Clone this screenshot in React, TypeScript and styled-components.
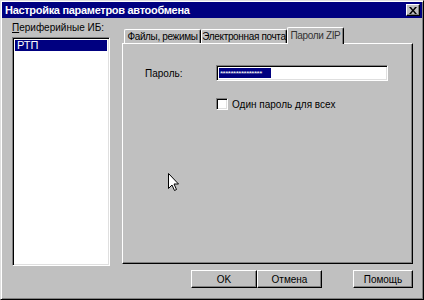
import styled, { createGlobalStyle } from 'styled-components'

const GlobalStyle = createGlobalStyle`
  html, body {
    margin: 0;
    padding: 0;
    background: #c0c0c0;
  }
  body {
    font-family: "Liberation Sans", Arial, sans-serif;
    font-size: 10px;
    color: #000;
  }
`

const Window = styled.div`
  position: relative;
  width: 424px;
  height: 300px;
  box-sizing: border-box;
  background: #c0c0c0;
  border-top: 1px solid #dfdfdf;
  border-left: 1px solid #dfdfdf;
  border-right: 1px solid #000;
  border-bottom: 1px solid #000;
  box-shadow: inset 1px 1px #fff, inset -1px -1px #808080;
  padding: 1px;
  display: flex;
  flex-direction: column;
`

const TitleBar = styled.div`
  height: 16px;
  background: #000080;
  color: #fff;
  font-weight: bold;
  font-size: 11px;
  display: flex;
  align-items: center;
  justify-content: space-between;
  padding-left: 3px;
  letter-spacing: -0.3px;
`

const CloseButton = styled.div`
  width: 14px;
  height: 12px;
  margin-right: 2px;
  box-sizing: border-box;
  background: #c0c0c0;
  border-top: 1px solid #fff;
  border-left: 1px solid #fff;
  border-right: 1px solid #000;
  border-bottom: 1px solid #000;
  box-shadow: inset -1px -1px #808080;
  display: flex;
  align-items: center;
  justify-content: center;
`

const Body = styled.div`
  display: flex;
  height: 248px;
`

const LeftCol = styled.div`
  display: flex;
  flex-direction: column;
  width: 98px;
  margin-left: 10px;
  padding-top: 3px;
`

const Label = styled.div`
  height: 13px;
  line-height: 13px;
  margin-bottom: 3px;
  white-space: nowrap;
  u {
    text-decoration: underline;
  }
`

const ListBox = styled.div`
  flex: 1;
  background: #fff;
  box-sizing: border-box;
  border-top: 1px solid #808080;
  border-left: 1px solid #808080;
  border-right: 1px solid #fff;
  border-bottom: 1px solid #fff;
  box-shadow: inset 1px 1px #000, inset -1px -1px #dfdfdf;
  padding: 2px;
`

const ListItem = styled.div<{ selected?: boolean }>`
  height: 11px;
  line-height: 11px;
  padding-left: 2px;
  font-size: 11px;
  background: ${(p) => (p.selected ? '#000080' : 'transparent')};
  color: ${(p) => (p.selected ? '#fff' : '#000')};
`

const RightCol = styled.div`
  display: flex;
  flex-direction: column;
  width: 291px;
  margin-left: 12px;
  padding-top: 9px;
  padding-bottom: 2px;
`

const TabRow = styled.div`
  display: flex;
  align-items: flex-end;
  height: 16px;
  padding-left: 2px;
  position: relative;
  z-index: 1;
`

const Tab = styled.div<{ active?: boolean; w: number }>`
  width: ${(p) => p.w}px;
  height: ${(p) => (p.active ? 17 : 14)}px;
  margin-bottom: ${(p) => (p.active ? -1 : 0)}px;
  box-sizing: border-box;
  background: #c0c0c0;
  border-top: 1px solid #fff;
  border-left: 1px solid #fff;
  border-right: 1px solid #000;
  border-radius: 2px 2px 0 0;
  box-shadow: inset -1px 0 #808080;
  display: flex;
  align-items: ${(p) => (p.active ? 'flex-start' : 'center')};
  justify-content: center;
  padding-top: ${(p) => (p.active ? 2 : 0)}px;
  white-space: nowrap;
  letter-spacing: -0.35px;
  color: ${(p) => (p.active ? '#333' : '#000')};
`

const Panel = styled.div`
  flex: 1;
  box-sizing: border-box;
  border-top: 1px solid #fff;
  border-left: 1px solid #fff;
  border-right: 1px solid #000;
  border-bottom: 1px solid #000;
  box-shadow: inset -1px -1px #808080;
  display: flex;
  flex-direction: column;
`

const FieldRow = styled.div`
  display: flex;
  align-items: center;
  margin-top: 21px;
  padding-left: 22px;
`

const FieldLabel = styled.div`
  width: 71px;
`

const TextField = styled.div`
  width: 172px;
  height: 16px;
  box-sizing: border-box;
  background: #fff;
  border-top: 1px solid #808080;
  border-left: 1px solid #808080;
  border-right: 1px solid #fff;
  border-bottom: 1px solid #fff;
  box-shadow: inset 1px 1px #000, inset -1px -1px #dfdfdf;
  padding: 2px;
  display: flex;
`

const Selection = styled.div`
  width: 50px;
  height: 10px;
  line-height: 12px;
  background: #000080;
  color: #fff;
  font-size: 8px;
  letter-spacing: -0.5px;
  overflow: hidden;
  white-space: nowrap;
  padding: 0 1px;
`

const CheckRow = styled.div`
  display: flex;
  align-items: center;
  margin-top: 17px;
  padding-left: 93px;
  gap: 4px;
`

const CheckBox = styled.div`
  width: 12px;
  height: 12px;
  box-sizing: border-box;
  background: #fff;
  border-top: 1px solid #808080;
  border-left: 1px solid #808080;
  border-right: 1px solid #fff;
  border-bottom: 1px solid #fff;
  box-shadow: inset 1px 1px #000, inset -1px -1px #dfdfdf;
`

const ButtonRow = styled.div`
  display: flex;
  justify-content: flex-end;
  margin-top: 4px;
  padding-right: 9px;
`

const Button = styled.div<{ w: number; gapLeft?: number }>`
  width: ${(p) => p.w}px;
  height: 18px;
  margin-left: ${(p) => p.gapLeft ?? 0}px;
  box-sizing: border-box;
  background: #c0c0c0;
  border-top: 1px solid #fff;
  border-left: 1px solid #fff;
  border-right: 1px solid #000;
  border-bottom: 1px solid #000;
  box-shadow: inset -1px -1px #808080;
  display: flex;
  align-items: center;
  justify-content: center;
`

const Cursor = styled.svg`
  position: absolute;
  left: 167px;
  top: 172px;
`

export default function App() {
  return (
    <>
      <GlobalStyle />
      <Window>
        <TitleBar>
          <span>Настройка параметров автообмена</span>
          <CloseButton>
            <svg width="8" height="7" viewBox="0 0 8 7">
              <path d="M0 0 L2 0 L4 2.5 L6 0 L8 0 L5 3.5 L8 7 L6 7 L4 4.5 L2 7 L0 7 L3 3.5 Z" fill="#000" />
            </svg>
          </CloseButton>
        </TitleBar>
        <Body>
          <LeftCol>
            <Label>
              <u>П</u>ериферийные ИБ:
            </Label>
            <ListBox>
              <ListItem selected>РТП</ListItem>
            </ListBox>
          </LeftCol>
          <RightCol>
            <TabRow>
              <Tab w={77}>Файлы, режимы</Tab>
              <Tab w={86}>Электронная почта</Tab>
              <Tab w={57} active>
                Пароли ZIP
              </Tab>
            </TabRow>
            <Panel>
              <FieldRow>
                <FieldLabel>Пароль:</FieldLabel>
                <TextField>
                  <Selection>****************</Selection>
                </TextField>
              </FieldRow>
              <CheckRow>
                <CheckBox />
                <span>Один пароль для всех</span>
              </CheckRow>
            </Panel>
          </RightCol>
        </Body>
        <ButtonRow>
          <Button w={66}>OK</Button>
          <Button w={65}>Отмена</Button>
          <Button w={60} gapLeft={31}>
            Помощь
          </Button>
        </ButtonRow>
        <Cursor width="12" height="19" viewBox="0 0 12 19">
          <path
            d="M0.5 0.5 L0.5 15.5 L4 12 L6.5 17.5 L8.5 16.5 L6 11 L10.5 11 Z"
            fill="#fff"
            stroke="#000"
            strokeWidth="1"
          />
        </Cursor>
      </Window>
    </>
  )
}
